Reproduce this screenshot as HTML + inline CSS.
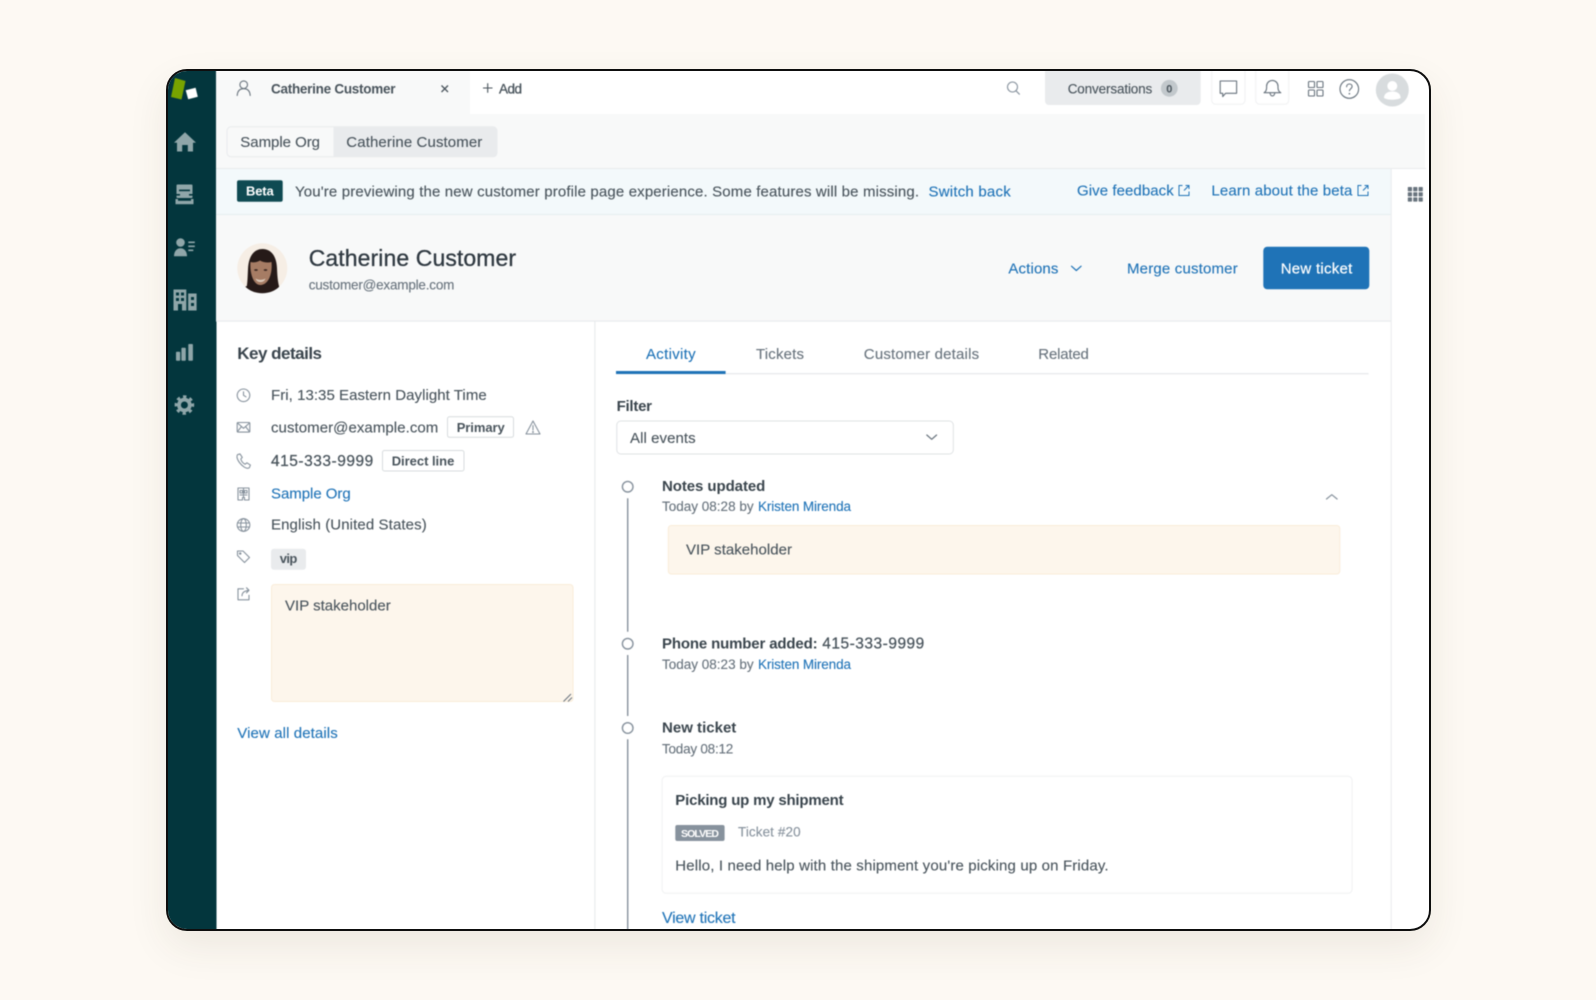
<!DOCTYPE html>
<html lang="en">
<head>
<meta charset="utf-8">
<title>Catherine Customer</title>
<style>
html,body{margin:0;padding:0;width:1596px;height:1000px;overflow:hidden;background:#fdf9f3;}
.frame{position:absolute;left:165.5px;top:69px;width:1265.2px;height:862px;box-sizing:border-box;border:2px solid #0e0e0e;border-radius:21px;overflow:hidden;background:#fff;box-shadow:0 16px 40px rgba(70,60,30,.085);}
.frame svg{position:absolute;left:-168px;top:-71px;display:block;filter:blur(.4px);}
text{font-family:"Liberation Sans",sans-serif;font-size:15px;fill:#49545c;white-space:pre;stroke:#49545c;stroke-width:.12px;}
text.b{font-weight:700;stroke:none;}
text.h{fill:#2f3941;stroke:#2f3941;}
text.l{fill:#1f73b7;stroke:#1f73b7;}
text.m{fill:#68737d;stroke:#68737d;}
text.g{fill:#87929d;stroke:#87929d;}
text.w{fill:#fff;stroke:#fff;}
.ic{fill:none;stroke:#68737d;stroke-width:1.1;stroke-linecap:round;stroke-linejoin:round;}
.ig{fill:none;stroke:#87929d;stroke-width:1.1;stroke-linecap:round;stroke-linejoin:round;}
.sb{fill:#8fa6a9;stroke:none;}
.sd{fill:#03363d;stroke:none;}
</style>
</head>
<body>
<div class="frame">
<svg width="1596" height="1000" viewBox="0 0 1596 1000" xmlns="http://www.w3.org/2000/svg">
  <!-- panels -->
  <rect x="160" y="60" width="56.500" height="880" fill="#03363d"/>
  <rect x="216" y="60" width="254" height="54" fill="#f8f9f9"/>
  <rect x="216" y="114" width="1209" height="54" fill="#f8f9f9"/>
  <rect x="216" y="168" width="1175.200" height="47" fill="#f3f9fb"/>
  <rect x="216" y="168" width="1210" height="1" fill="#e9ebed"/>
  <rect x="216" y="214" width="1175.200" height="1.400" fill="#e6eef0"/>
  <rect x="216" y="215" width="1175.200" height="105.500" fill="#f8f9f9"/>
  <rect x="216" y="320.500" width="1175.200" height="1.200" fill="#e9ebed"/>
  <rect x="594.300" y="321" width="1.200" height="620" fill="#e9ebed"/>
  <rect x="1390.700" y="168" width="1" height="772" fill="#e9ebed"/>

  <!-- sidebar logo -->
  <polygon points="175,78 185.500,81 181.500,99.500 171,97" fill="#78a300"/>
  <polygon points="185.700,90.200 195.600,87.800 197.800,96.800 188.200,99.300" fill="#fff"/>
  <!-- home -->
  <path class="sb" d="M174 142.600 185 132.300 196 142.600 193 142.800V151.500H187.800V145H182.200V151.500H177V142.800Z"/>
  <!-- inbox -->
  <g>
    <rect class="sb" x="176.500" y="184.500" width="16" height="13.500" rx="1"/>
    <rect class="sd" x="179" y="189.600" width="11" height="1.600"/>
    <rect class="sd" x="176.500" y="194" width="3.500" height="1.600"/>
    <rect class="sd" x="189" y="194" width="3.500" height="1.600"/>
    <rect class="sb" x="175.500" y="199" width="18" height="5.200"/>
    <rect class="sd" x="178" y="199" width="13" height="1.800"/>
  </g>
  <!-- people -->
  <circle class="sb" cx="180.500" cy="242.500" r="4.300"/>
  <path class="sb" d="M174 256.200c0-5 2.800-8 6.500-8s6.500 3 6.500 8Z"/>
  <rect class="sb" x="188.300" y="241.500" width="6.500" height="1.600"/>
  <rect class="sb" x="188.300" y="245.500" width="6.500" height="1.600"/>
  <rect class="sb" x="188.300" y="249.500" width="5" height="1.600"/>
  <!-- building -->
  <rect class="sb" x="173.500" y="289.500" width="12.800" height="21"/>
  <rect class="sb" x="188.200" y="293.500" width="8.400" height="17"/>
  <g class="sd">
    <rect x="176" y="292.500" width="3" height="3"/><rect x="181" y="292.500" width="3" height="3"/>
    <rect x="176" y="298" width="3" height="3"/><rect x="181" y="298" width="3" height="3"/>
    <rect x="178" y="304" width="4" height="6.500"/>
    <rect x="191" y="297" width="3" height="3"/><rect x="191" y="303" width="3" height="3"/>
  </g>
  <!-- chart -->
  <rect class="sb" x="176" y="351.700" width="4.200" height="9" rx=".8"/>
  <rect class="sb" x="181.400" y="347.700" width="4.400" height="13" rx=".8"/>
  <rect class="sb" x="188.300" y="344" width="4.600" height="16.700" rx=".8"/>
  <!-- gear -->
  <circle cx="184.400" cy="405" r="5.400" fill="none" stroke="#8fa6a9" stroke-width="3.800"/>
  <circle cx="184.400" cy="405" r="8.300" fill="none" stroke="#8fa6a9" stroke-width="3" stroke-dasharray="3.300 3.220" transform="rotate(-11 184.400 405)"/>

  <!-- top bar -->
  <g class="ic" transform="translate(243.700 89)">
    <circle cx="0" cy="-4.300" r="3.800"/>
    <path d="M-6.500 6.500c.3-4.500 2.500-6.800 6.500-6.800s6.200 2.300 6.500 6.800"/>
  </g>
  <text class="b" x="271" y="93.400" style="font-size:13.500px;fill:#49545c" textLength="124.500">Catherine Customer</text>
  <path d="M441.500 85.500l6.500 6.500m0-6.500l-6.500 6.500" stroke="#49545c" stroke-width="1.300" fill="none"/>
  <path d="M483 88h9.500M487.700 83.300v9.500" stroke="#49545c" stroke-width="1.100" fill="none"/>
  <text x="499" y="93.400" style="font-size:13.500px;stroke-width:.3px" textLength="23">Add</text>
  <g class="ig"><circle cx="1012.500" cy="87" r="5"/><path d="M1016 90.800l3.400 3.400"/></g>
  <path d="M1045 69H1200.700V101a4 4 0 0 1-4 4H1049a4 4 0 0 1-4-4Z" fill="#e9ebed"/>
  <text x="1067.700" y="93.400" style="font-size:13.500px" textLength="84.600">Conversations</text>
  <circle cx="1169.300" cy="88.300" r="8.400" fill="#c2c8cc"/>
  <text class="b" x="1166.200" y="92.300" style="font-size:11px" textLength="6.400">0</text>
  <path d="M1211.700 69V100.300a4 4 0 0 0 4 4H1241a4 4 0 0 0 4-4V69" fill="#fff" stroke="#f0f1f2"/>
  <path d="M1255.700 69V100.300a4 4 0 0 0 4 4H1284.700a4 4 0 0 0 4-4V69" fill="#fff" stroke="#f0f1f2"/>
  <path class="ic" d="M1220.200 81H1236.600V93.300H1225.600L1222.700 96.600V93.300H1220.200Z"/>
  <path class="ic" d="M1264 92.700c1.700-1 2.600-2.600 2.600-5v-1.600a5.700 5.700 0 0 1 11.400 0v1.600c0 2.400.9 4 2.800 5ZM1270 92.900c.3 2 1.200 3 2.400 3s2.100-1 2.400-3"/>
  <g class="ic">
    <rect x="1308.500" y="81.500" width="6" height="6" rx=".8"/><rect x="1317" y="81.500" width="6" height="6" rx=".8"/>
    <rect x="1308.500" y="90" width="6" height="6" rx=".8"/><rect x="1317" y="90" width="6" height="6" rx=".8"/>
  </g>
  <circle cx="1349.300" cy="89" r="9.300" class="ic"/>
  <path class="ic" d="M1346.600 86.800c0-1.700 1.200-2.800 2.800-2.800s2.700 1 2.700 2.500c0 2.200-2.700 2.300-2.700 4.300"/>
  <circle cx="1349.400" cy="93.700" r=".8" fill="#68737d"/>
  <circle cx="1392.300" cy="90" r="16.500" fill="#d8dcde"/>
  <circle cx="1392.300" cy="86" r="5" fill="#fff"/>
  <path d="M1384 98c0-4.500 3.500-6.500 8.300-6.500s8.300 2 8.300 6.500c-2 1.200-5 1.800-8.300 1.800s-6.300-.6-8.300-1.800Z" fill="#fff"/>

  <!-- breadcrumb -->
  <rect x="227" y="126.800" width="270" height="30" rx="4" fill="#f8f9f9" stroke="#e9ebed"/>
  <path d="M333.500 126.800H493a4 4 0 0 1 4 4V152.800a4 4 0 0 1-4 4H333.500Z" fill="#e9ebed"/>
  <text x="240.300" y="147" textLength="79.700">Sample Org</text>
  <text x="346.300" y="147" textLength="136">Catherine Customer</text>

  <!-- banner -->
  <rect x="237" y="180.300" width="45.700" height="21.400" rx="2" fill="#0f4a52"/>
  <text class="b w" x="246" y="195.700" style="font-size:13px;stroke:none" textLength="27.700">Beta</text>
  <text x="295" y="196.400" textLength="624">You're previewing the new customer profile page experience. Some features will be missing.</text>
  <text class="l" x="928.500" y="196.400" textLength="82.200">Switch back</text>
  <text class="l" x="1077" y="195.600" textLength="96.700">Give feedback</text>
  <text class="l" x="1211.400" y="195.600" textLength="141">Learn about the beta</text>
  <g fill="none" stroke="#1f73b7" stroke-width="1">
    <path d="M1182.500 185.500H1179V195.500H1189V191.500M1184 190.500L1189 185.500M1185.500 185.500H1189V189"/>
    <path d="M1361.500 185.500H1358V195.500H1368V191.500M1363 190.500L1368 185.500M1364.500 185.500H1368V189"/>
  </g>
  <g fill="#68737d">
    <rect x="1407.800" y="187" width="4.200" height="4.200" rx=".6"/><rect x="1413.200" y="187" width="4.200" height="4.200" rx=".6"/><rect x="1418.600" y="187" width="4.200" height="4.200" rx=".6"/>
    <rect x="1407.800" y="192.200" width="4.200" height="4.200" rx=".6"/><rect x="1413.200" y="192.200" width="4.200" height="4.200" rx=".6"/><rect x="1418.600" y="192.200" width="4.200" height="4.200" rx=".6"/>
    <rect x="1407.800" y="197.400" width="4.200" height="4.200" rx=".6"/><rect x="1413.200" y="197.400" width="4.200" height="4.200" rx=".6"/><rect x="1418.600" y="197.400" width="4.200" height="4.200" rx=".6"/>
  </g>

  <!-- header -->
  <defs><clipPath id="av"><circle cx="262.300" cy="268.300" r="25"/></clipPath></defs>
  <circle cx="262.300" cy="268.300" r="25" fill="#f6eee5"/>
  <g clip-path="url(#av)">
    <path d="M245.500 292c2-6 2-13 2.500-23 .6-13 6-20 14.500-20s14 7 14.500 19c.4 10 1 17 4 24Z" fill="#261a18"/>
    <path d="M236 297c3-8 9-11 15-12l20-.5c5 1 11 4 15 12.500Z" fill="#261a18"/>
    <path d="M250.500 262c3 .8 7 .2 9.500-1.500 3 1.800 8 2.500 11.500 1.500 1 10-2 22-10.500 23-7.500 .8-11.500-12-10.500-23Z" fill="#a67c64"/>
    <path d="M255.500 278.500c3 1.800 7 1.800 10 0-1 2.800-2.800 3.500-5 3.500s-4-.7-5-3.500Z" fill="#dccabb"/>
    <ellipse cx="256" cy="270" rx="1.800" ry=".9" fill="#3a2620"/>
    <ellipse cx="265.500" cy="270" rx="1.800" ry=".9" fill="#3a2620"/>
  </g>
  <text class="h" x="308.700" y="266.200" style="font-size:23px;stroke-width:.3px" textLength="207.400">Catherine Customer</text>
  <text class="m" x="308.700" y="289.300" style="font-size:13.500px" textLength="145.700">customer@example.com</text>
  <text class="l" x="1008.400" y="273.300" textLength="50">Actions</text>
  <path d="M1071.500 266.200l4.800 4.300 4.800-4.300" fill="none" stroke="#1f73b7" stroke-width="1.200" stroke-linecap="round" stroke-linejoin="round"/>
  <text class="l" x="1127" y="273.300" textLength="110.700">Merge customer</text>
  <rect x="1263.300" y="246.700" width="106" height="42.600" rx="4" fill="#1f73b7"/>
  <text class="w" x="1280.700" y="273.300" style="stroke-width:.2px" textLength="71.600">New ticket</text>

  <!-- left panel -->
  <text class="b h" x="237.300" y="359.200" style="font-size:17px;stroke:none;fill:#3a454d" textLength="84.700">Key details</text>

  <g class="ig" transform="translate(243.500 395.300)"><circle r="6.300"/><path d="M0-3.500V0L2.500 1.500"/></g>
  <text x="271" y="400" textLength="215.700">Fri, 13:35 Eastern Daylight Time</text>

  <g class="ig" transform="translate(243.500 427.300)"><rect x="-6.300" y="-4.800" width="12.600" height="9.600" rx=".8"/><path d="M-6-4.300L0 1 6-4.300M-6 4.300L-2 -.8M6 4.300L2-.8"/></g>
  <text x="271" y="432.300" textLength="167.300">customer@example.com</text>
  <rect x="447.500" y="416.800" width="66" height="20.500" rx="2" fill="#fff" stroke="#d8dcde"/>
  <text class="b" x="456.700" y="432" style="font-size:13px;stroke:none" textLength="48">Primary</text>
  <g class="ig" transform="translate(533 428)"><path d="M0-7L7 6H-7Z"/><path d="M0-2.500V2"/><circle cy="4" r=".4"/></g>

  <g class="ig" transform="translate(243.500 461)"><path d="M-6-6.300l2.500-.8 2.300 3.500-1.500 1.600c.6 2.200 2.300 4.300 4.400 5.200l1.700-1.400 3.500 2.300-1 2.500c-1 1-3 .8-5-.4C-3 3.700-6-.5-6.500-3.700c-.1-1.100 0-2 .5-2.600Z"/></g>
  <text x="271" y="466" style="font-size:15.500px;stroke-width:.25px" textLength="102.300">415-333-9999</text>
  <rect x="382.500" y="450.500" width="81.500" height="20.500" rx="2" fill="#fff" stroke="#d8dcde"/>
  <text class="b" x="391.700" y="465.700" style="font-size:13px;stroke:none" textLength="62.600">Direct line</text>

  <g class="ig" transform="translate(243.500 494)"><path d="M-5.500-6H5.500V6H1V3.500H-1V6H-5.500ZM-3.500-3.500H-1V-1H-3.500ZM1-3.500H3.500V-1H1ZM-3.500 1H-1M1 1H3.500M0-6V3.500"/></g>
  <text class="l" x="271" y="498.300" textLength="79.700">Sample Org</text>

  <g class="ig" transform="translate(243.500 525)"><circle r="6.300"/><ellipse rx="2.800" ry="6.300"/><path d="M-6-2H6M-6 2H6"/></g>
  <text x="271" y="529.300" textLength="155.700">English (United States)</text>

  <g class="ig" transform="translate(243.500 556.500)"><path d="M-6-5.500H-.5L6 1 1 6-6-1Z"/><circle cx="-3.300" cy="-3" r=".7"/></g>
  <rect x="271" y="548.800" width="35" height="21" rx="3" fill="#e9ebed"/>
  <text class="b" x="279.700" y="563.200" style="font-size:13px;stroke:none" textLength="17.600">vip</text>

  <g class="ig" transform="translate(243.500 594.300)"><path d="M0-5.500H-5.500V5.500H5.500V1M-1.500 1.500C-1.500-1.500 1-3.500 5.500-4M3-6.500L5.500-4 3-1.500"/></g>
  <rect x="271.500" y="584.500" width="301.500" height="117" rx="3" fill="#fdf6ec" stroke="#f9ecd9"/>
  <text x="285" y="610.600" textLength="105.700">VIP stakeholder</text>
  <path d="M563.500 701.500L571 694M568 701.500L572 697.500" stroke="#68737d" stroke-width="1" fill="none"/>
  <text class="l" x="237.300" y="738" textLength="100.400">View all details</text>

  <!-- activity panel -->
  <g transform="translate(-.7 0)">
  <rect x="616.700" y="373" width="752.600" height="1.400" fill="#e9ebed"/>
  <rect x="616.700" y="371" width="109.600" height="3" fill="#1f73b7"/>
  <text class="l" x="646.700" y="358.800" textLength="49.600">Activity</text>
  <text class="m" x="756.700" y="358.800" textLength="48">Tickets</text>
  <text class="m" x="864.500" y="358.800" textLength="115.300">Customer details</text>
  <text class="m" x="1039" y="358.800" textLength="50.600">Related</text>

  <text class="b h" x="617.300" y="411" style="stroke:none;fill:#3a454d" textLength="35.400">Filter</text>
  <rect x="617.500" y="421" width="336.500" height="33" rx="4" fill="#fff" stroke="#dfe2e4"/>
  <text x="630.700" y="443.100" textLength="65.600">All events</text>
  <path d="M927.500 435l4.900 4.300 4.900-4.300" fill="none" stroke="#68737d" stroke-width="1.200" stroke-linecap="round" stroke-linejoin="round"/>

  <g fill="none" stroke="#87929d" stroke-width="1.400">
    <circle cx="628.400" cy="486.700" r="5.300"/>
    <path d="M628.400 498.300V631.700"/>
    <circle cx="628.400" cy="643.700" r="5.300"/>
    <path d="M628.400 655V716"/>
    <circle cx="628.400" cy="728" r="5.300"/>
    <path d="M628.400 739.300V935"/>
  </g>
  <text class="b h" x="662.700" y="491.200" style="stroke:none;fill:#3a454d" textLength="103.300">Notes updated</text>
  <text class="m" x="662.700" y="511.200" style="font-size:13.500px" textLength="91.600">Today 08:28 by</text>
  <text class="l" x="758.700" y="511.200" style="font-size:13.500px" textLength="93">Kristen Mirenda</text>
  <path d="M1327.200 499l5.300-4.300 5.300 4.300" fill="none" stroke="#87929d" stroke-width="1.200" stroke-linecap="round" stroke-linejoin="round"/>
  <rect x="669" y="525.500" width="671.500" height="48.500" rx="3" fill="#fdf6ec" stroke="#f9ecd9"/>
  <text x="686.700" y="554.700" textLength="106">VIP stakeholder</text>

  <text class="b h" x="662.700" y="648.300" style="stroke:none;fill:#3a454d" textLength="155.600">Phone number added:</text>
  <text x="823" y="648.300" style="font-size:15.500px;stroke-width:.25px" textLength="102">415-333-9999</text>
  <text class="m" x="662.700" y="668.900" style="font-size:13.500px" textLength="91.600">Today 08:23 by</text>
  <text class="l" x="758.700" y="668.900" style="font-size:13.500px" textLength="93">Kristen Mirenda</text>

  <text class="b h" x="662.700" y="732.700" style="stroke:none;fill:#3a454d" textLength="74.300">New ticket</text>
  <text class="m" x="662.700" y="753.700" style="font-size:13.500px" textLength="71.300">Today 08:12</text>

  <rect x="662.800" y="776.300" width="690" height="117" rx="4" fill="#fff" stroke="#f0f1f2"/>
  <text class="b h" x="676" y="805.200" style="stroke:none;fill:#3a454d" textLength="168.300">Picking up my shipment</text>
  <rect x="676" y="825" width="49.300" height="16" rx="2" fill="#87929d"/>
  <text class="b w" x="681.700" y="836.800" style="font-size:10.500px;stroke:none" textLength="38">SOLVED</text>
  <text class="g" x="738.700" y="836.600" style="font-size:13.500px" textLength="62.600">Ticket #20</text>
  <text x="676" y="870.700" textLength="433.300">Hello, I need help with the shipment you're picking up on Friday.</text>
  <text class="l" x="662.700" y="923" style="font-size:16px" textLength="73.600">View ticket</text>
  </g>
</svg>
</div>
</body>
</html>
